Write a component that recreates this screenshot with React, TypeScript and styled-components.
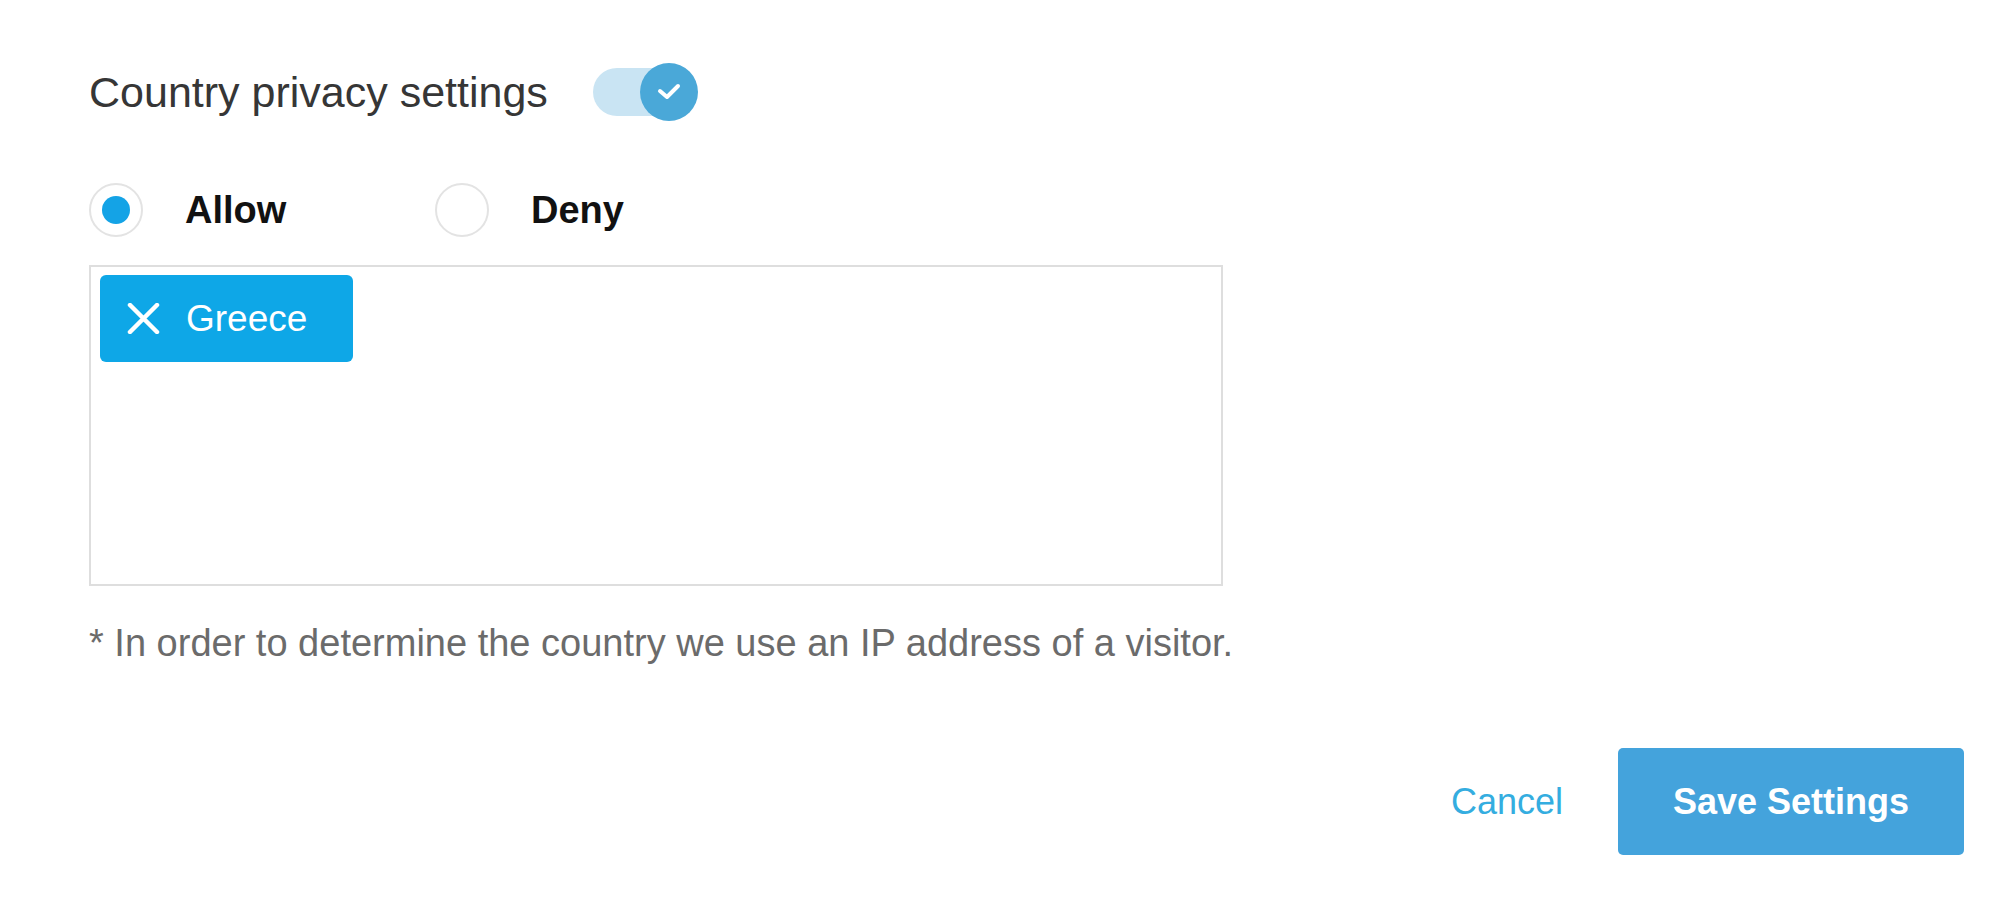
import styled, { createGlobalStyle } from "styled-components";

const GlobalStyle = createGlobalStyle`
  html, body {
    margin: 0;
    padding: 0;
    background: #ffffff;
  }
  body {
    font-family: "Liberation Sans", Arial, sans-serif;
  }
`;

const Page = styled.div`
  width: 1993px;
  height: 897px;
  box-sizing: border-box;
  padding: 62px 29px 0 89px;
  display: flex;
  flex-direction: column;
  background: #fff;
  overflow: hidden;
`;

const TitleRow = styled.div`
  display: flex;
  align-items: center;
  gap: 45px;
  height: 60px;
`;

const Title = styled.h2`
  margin: 0;
  font-size: 43px;
  font-weight: 400;
  color: #363636;
`;

const Toggle = styled.div`
  position: relative;
  width: 105px;
  height: 60px;
  display: flex;
  align-items: center;
`;

const Track = styled.div`
  width: 88px;
  height: 48px;
  border-radius: 24px;
  background: #c9e4f3;
`;

const Knob = styled.div`
  position: absolute;
  right: 0;
  top: 1px;
  width: 58px;
  height: 58px;
  border-radius: 50%;
  background: #4aa8d8;
  display: flex;
  align-items: center;
  justify-content: center;
`;

const RadioGroup = styled.div`
  display: flex;
  align-items: center;
  margin-top: 61px;
  height: 54px;
`;

const RadioOption = styled.label`
  display: flex;
  align-items: center;
  gap: 42px;
  min-width: 346px;
  font-size: 38px;
  font-weight: 700;
  color: #111;
`;

const RadioCircle = styled.span<{ $checked?: boolean }>`
  width: 54px;
  height: 54px;
  box-sizing: border-box;
  border-radius: 50%;
  border: 2px solid #e3e3e3;
  display: flex;
  align-items: center;
  justify-content: center;

  &::after {
    content: "";
    display: ${(p) => (p.$checked ? "block" : "none")};
    width: 28px;
    height: 28px;
    border-radius: 50%;
    background: #14a3e6;
  }
`;

const CountryBox = styled.div`
  margin-top: 28px;
  width: 1134px;
  height: 321px;
  box-sizing: border-box;
  border: 2px solid #dedede;
  padding: 8px 9px;
`;

const Chip = styled.div`
  width: 253px;
  height: 87px;
  box-sizing: border-box;
  border-radius: 6px;
  background: #0ea7e7;
  display: flex;
  align-items: center;
  gap: 26px;
  padding-left: 27px;
  color: #fff;
  font-size: 37px;
`;

const Note = styled.p`
  margin: 35px 0 0;
  font-size: 38px;
  line-height: 44px;
  color: #6b6b6b;
`;

const Actions = styled.div`
  margin-top: 83px;
  display: flex;
  justify-content: flex-end;
  align-items: center;
  gap: 55px;
`;

const CancelButton = styled.button`
  border: none;
  background: none;
  padding: 0;
  font-family: inherit;
  font-size: 36px;
  color: #34ade0;
  cursor: pointer;
`;

const SaveButton = styled.button`
  width: 346px;
  height: 107px;
  border: none;
  border-radius: 5px;
  background: #44a3dc;
  color: #fff;
  font-family: inherit;
  font-size: 36px;
  font-weight: 700;
  cursor: pointer;
`;

const App = () => {
  return (
    <>
      <GlobalStyle />
      <Page>
        <TitleRow>
          <Title>Country privacy settings</Title>
          <Toggle>
            <Track />
            <Knob>
              <svg width="28" height="20" viewBox="0 0 28 20">
                <path
                  d="M5 9 L12 15 L23 4"
                  fill="none"
                  stroke="#fff"
                  strokeWidth="4"
                  strokeLinecap="round"
                  strokeLinejoin="round"
                />
              </svg>
            </Knob>
          </Toggle>
        </TitleRow>
        <RadioGroup>
          <RadioOption>
            <RadioCircle $checked />
            Allow
          </RadioOption>
          <RadioOption>
            <RadioCircle />
            Deny
          </RadioOption>
        </RadioGroup>
        <CountryBox>
          <Chip>
            <svg width="33" height="31" viewBox="0 0 33 31">
              <path
                d="M3 2 L30 29 M30 2 L3 29"
                stroke="#fff"
                strokeWidth="4.5"
                strokeLinecap="round"
              />
            </svg>
            Greece
          </Chip>
        </CountryBox>
        <Note>* In order to determine the country we use an IP address of a visitor.</Note>
        <Actions>
          <CancelButton>Cancel</CancelButton>
          <SaveButton>Save Settings</SaveButton>
        </Actions>
      </Page>
    </>
  );
};

export default App;
